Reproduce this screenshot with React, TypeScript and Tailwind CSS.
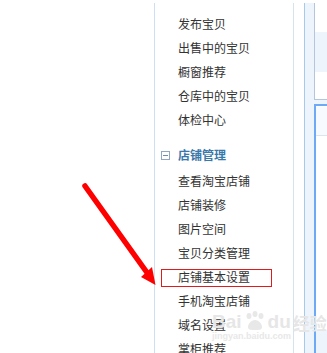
import React from 'react';

const topItems = ['发布宝贝', '出售中的宝贝', '橱窗推荐', '仓库中的宝贝', '体检中心'];
const shopItems = ['查看淘宝店铺', '店铺装修', '图片空间', '宝贝分类管理', '店铺基本设置', '手机淘宝店铺', '域名设置', '掌柜推荐'];

const font = { fontFamily: '"Noto Sans CJK SC", "Liberation Sans", sans-serif' };

function Item({ label }: { label: string }) {
  return <div className="h-[24px] leading-[24px] pl-[23px] text-[12px] text-[#333] whitespace-nowrap">{label}</div>;
}

export default function App() {
  return (
    <div className="relative w-[327px] h-[353px] overflow-hidden bg-white" style={font}>
      <div className="flex h-full pt-[3px]">
        <div className="w-[154px] shrink-0" />
        {/* sidebar */}
        <div className="w-[140px] shrink-0 border-l border-r border-l-[#cddff4] border-r-[#d6e2ef] pt-[9px]">
          {topItems.map(t => <Item key={t} label={t} />)}
          <div className="mt-[11px] h-[24px] flex items-center pl-[6px] gap-[8px]">
            <div className="w-[9px] h-[9px] border border-[#8fa9c2] flex items-center justify-center">
              <div className="w-[5px] h-px bg-[#6f8ca8]" />
            </div>
            <span className="text-[12px] font-bold text-[#3b78aa]">店铺管理</span>
          </div>
          <div className="mt-[2px]">
            {shopItems.map(t => <Item key={t} label={t} />)}
          </div>
        </div>
        <div className="w-[10px] shrink-0" />
        {/* right strip */}
        <div className="flex-1 flex border-l border-[#a9c8ee] bg-[#eef4fc]">
          <div className="w-[9px] shrink-0" />
          <div className="flex-1 flex flex-col">
            <div className="h-[97px] bg-white border-l border-b border-[#b4c6da] pt-[29px]">
              <div className="h-[40px] bg-[#eef4fc]" />
            </div>
            <div className="h-[4px]" />
            <div className="flex-1 bg-white border-l-2 border-t-2 border-[#6ea9f5] flex flex-col">
              <div className="mt-px h-[29px] bg-[#f7faff] border-b border-[#dbe5f0]" />
              <div className="flex-1" />
              <div className="h-[23px] bg-[#eef4fc]" />
            </div>
          </div>
        </div>
      </div>

      {/* watermark */}
      <div className="absolute left-[212px] top-[311px] flex items-end whitespace-nowrap text-[#e6e6e6] font-bold text-[19px] leading-none pointer-events-none" style={{ fontFamily: '"Liberation Sans", "Noto Sans CJK SC", sans-serif' }}>
        <span>Bai</span>
        <svg width="24" height="20" viewBox="0 0 24 20" className="mx-[1px] shrink-0">
          <g fill="#e8e8e8">
            <ellipse cx="6" cy="5" rx="2.5" ry="3" />
            <ellipse cx="12" cy="3" rx="2.5" ry="3" />
            <ellipse cx="18" cy="5" rx="2.5" ry="3" />
            <path d="M12 9c-4 0-7 4-7 7s3 3 7 3 7 0 7-3-3-7-7-7z" />
          </g>
        </svg>
        <span>du</span>
        <span className="ml-[2px] text-[17px]" style={{ fontFamily: '"Noto Sans CJK SC", sans-serif' }}>经验</span>
      </div>
      <div className="absolute left-[212px] top-[332px] whitespace-nowrap text-[9px] leading-none text-[#e8e8e8] font-bold pointer-events-none" style={{ fontFamily: '"Liberation Sans", sans-serif' }}>
        jingyan.baidu.com
      </div>

      {/* annotation box */}
      <div className="absolute left-[161px] top-[269px] w-[111px] h-[18px] border border-[#e01b1b]" />

      {/* arrow */}
      <svg className="absolute left-0 top-0" width="327" height="353" viewBox="0 0 327 353">
        <line x1="85" y1="186" x2="148" y2="274" stroke="#ff0000" strokeWidth="5.5" strokeLinecap="round" />
        <polygon points="141,277 152,267 155.5,285" fill="#ff0000" />
      </svg>
    </div>
  );
}
